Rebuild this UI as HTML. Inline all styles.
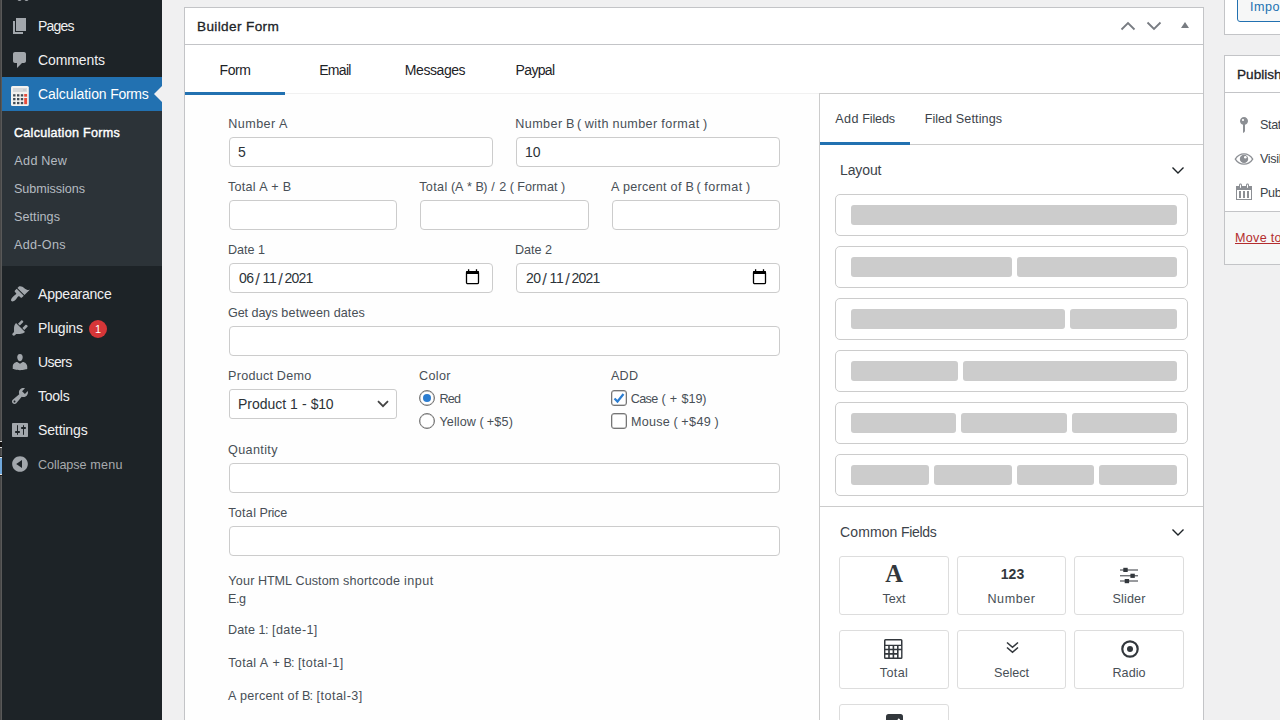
<!DOCTYPE html>
<html lang="en"><head>
<meta charset="utf-8">
<title>Edit Calculation Form</title>
<style>
*{box-sizing:border-box}
html,body{margin:0;padding:0}
body{width:1280px;height:720px;overflow:hidden;position:relative;background:#f0f0f1;
  font-family:"Liberation Sans",sans-serif;font-size:12.600px;line-height:18px;color:#3c434a}
ul{margin:0;padding:0;list-style:none}
h2,p{margin:0}
svg{display:block}
.abs{position:absolute}
.t{position:absolute;white-space:nowrap;line-height:18px}
.w{display:inline-block;white-space:nowrap;text-align:left;word-spacing:0}

/* window edge strip */
#edge{position:absolute;left:0;top:0;width:2px;height:720px;background:linear-gradient(90deg,#484848 0,#484848 50%,#595959 50%,#595959 100%)}
#edge i{position:absolute;left:0;width:2px}

/* admin menu */
#adminmenu{position:absolute;left:2px;top:0;width:160px;height:720px;background:#1d2327;color:#f0f0f1;font-size:14px}
#adminmenu li.top{position:absolute;left:0;width:160px;height:34px}
#adminmenu li.top .ic{position:absolute;left:8px;top:7px;width:20px;height:20px}
#adminmenu li.top .ic svg{width:20px;height:20px;fill:#a2a7ac}
#adminmenu li.top .nm{position:absolute;left:36px;top:8px;line-height:18px;white-space:nowrap}
#adminmenu li.current{background:#2271b1;color:#fff}
#adminmenu li.current:after{content:"";position:absolute;right:0;top:9px;border:8px solid transparent;border-right-color:#f0f0f1}
#adminmenu .sub{position:absolute;left:0;top:34px;width:160px;height:155px;background:#2c3338;padding-top:7px;font-size:12.600px;color:#b5bbc1}
#adminmenu .sub li{height:28px;padding:6px 12px 4px;line-height:18px;white-space:nowrap}
#adminmenu .sub li.cur{color:#fff;-webkit-text-stroke:.4px #fff}
#adminmenu .badge{position:absolute;left:87px;top:9px;width:18px;height:18px;border-radius:9px;background:#d63638;color:#fff;font-size:11px;line-height:18px;text-align:center}

/* postboxes */
.postbox{position:absolute;background:#fff;border:1px solid #c3c4c7}
.postbox h2{font-size:13.600px;font-weight:normal;-webkit-text-stroke:.3px #1d2327;color:#1d2327;line-height:18px}

.tabs{z-index:1;position:absolute;left:0;top:37px;width:1018px;height:49px;border-bottom:1px solid #f1f1f1}
.tabs li{position:absolute;top:0;width:100px;height:50px;text-align:center;font-size:14px;line-height:18px;padding-top:16px;color:#1d2327;white-space:nowrap}
.tabs li.on{border-bottom:3px solid #2271b1}
.canvas{position:absolute;left:0;top:86px;width:634px;height:700px;background:#fefefe;margin:0}
.panel{z-index:2;position:absolute;left:634px;top:85px;width:384px;height:700px;border-left:1px solid #ccc;border-top:1px solid #ccc;background:#fff}
.btn{display:block;height:30px;border:1px solid #2271b1;border-radius:3px;background:#f6f7f7;color:#2271b1;padding:0 10px 0 12px;line-height:28px;white-space:nowrap}

.lb{color:#484f56;font-size:12.600px;margin-top:1px}
.in{position:absolute;height:30px;border:1px solid #ccc;border-radius:4px;background:#fff;font:14px/18px "Liberation Sans",sans-serif;color:#2c3338;padding:0 8px;margin:0;outline:0}
.in.date .cal{position:absolute;right:12px;top:5px}
.in.sel{border-radius:3px}
.in .sl{font-size:16.500px;width:6px;text-align:center;color:#3c434a;margin-top:1px}
.in.sel .chev{position:absolute;right:7px;top:10px}
.radio,.check{position:absolute;width:16px;height:16px;border:1px solid #767676;background:#fff;box-shadow:inset 0 0 0 .4px #999}
.radio{border-radius:50%}
.radio.on:after{content:"";position:absolute;left:3px;top:3px;width:8px;height:8px;border-radius:50%;background:#2b7dd1}
.check{border-radius:3px}
.check svg{position:absolute;left:-1px;top:-1px}

.ptabs{position:absolute;left:0;top:0;width:383px;height:51px;border-bottom:1px solid #ccc}
.ptabs li{position:absolute;top:0;height:51px;text-align:center;font-size:12.600px;line-height:18px;padding-top:16px;color:#3c434a;white-space:nowrap}
.ptabs li.on{border-bottom:3px solid #2271b1}
.grp{position:absolute;left:0;width:383px;border-bottom:1px solid #ccc}
.grp h3{margin:0;font-size:14px;font-weight:normal;color:#3c434a}
.grp .chv{position:absolute;left:351px;top:21px}
.lay{position:absolute;left:15px;width:353px;height:42px;border:1px solid #ccc;border-radius:5px;background:#fff}
.lay i{position:absolute;top:10px;height:20px;background:#ccc;border-radius:3px}
.fld{position:absolute;height:59px;border:1px solid #ddd;border-radius:3px;background:#fff;padding:0;margin:0;font:12.600px/18px "Liberation Sans",sans-serif;color:#484f56;text-align:center}
.fld .gi{position:absolute;left:0;right:0;color:#32373c;text-align:center}
.fld .gs{position:absolute}
.fld .fl{position:absolute;left:0;right:0;top:33px;white-space:nowrap;line-height:18px}
.misc li{position:absolute;left:0;width:298px;height:20px}
.misc svg{position:absolute;left:9px;top:0;width:20px;height:20px;fill:#8c8f94}
.misc .t{left:35px;top:1px;letter-spacing:-.35px}
.acts{position:absolute;left:0;top:155px;width:298px;height:53px;border-top:1px solid #c3c4c7;background:#f6f7f7}
.del{color:#b32d2e;text-decoration:underline}
</style>
</head>
<body>

<div id="edge">
  <i style="top:441px;height:1px;background:#d8d8d8"></i>
  <i style="top:442px;height:5px;background:#111"></i>
  <i style="top:447px;height:1px;background:#d8d8d8"></i>
  <i style="top:456px;height:1px;background:#222"></i>
  <i style="top:457px;height:1px;background:#e8e8e8"></i>
  <i style="top:458px;height:16px;background:#6fa8dc"></i>
  <i style="top:474px;height:1px;background:#e8e8e8"></i>
  <i style="top:475px;height:1px;background:#222"></i>
</div>

<nav id="adminmenu">
  <ul>
    <li class="top" style="top:-25px"><span class="ic" style="top:7.400px"><svg viewBox="0 0 20 20"><path d="M13 11V4c0-.55-.45-1-1-1h-1.670L9 1H5L3.670 3H2c-.55 0-1 .45-1 1v7c0 .55.45 1 1 1h10c.55 0 1-.45 1-1zM7 4.500c1.380 0 2.500 1.120 2.500 2.500S8.380 9.500 7 9.500 4.500 8.380 4.500 7 5.620 4.500 7 4.500zM14 6h5v10.500c0 1.380-1.120 2.500-2.500 2.500S14 17.880 14 16.500s1.120-2.500 2.500-2.500c.17 0 .34.020.5.050V9h-3V6zm-4 8.050V13h2v3.500c0 1.380-1.120 2.500-2.500 2.500S7 17.880 7 16.500 8.120 14 9.500 14c.17 0 .34.020.5.050z"></path></svg></span><span class="nm">Media</span></li>
    <li class="top" style="top:9px"><span class="ic"><svg viewBox="0 0 20 20"><path d="M6 15V2h10v13H6zm-1 1h8v2H3V5h2v11z"></path></svg></span><span class="nm" style="letter-spacing: -0.801px;">Pages</span></li>
    <li class="top" style="top:43px"><span class="ic"><svg viewBox="0 0 20 20"><path d="M5 2h9c1.100 0 2 .9 2 2v7c0 1.100-.9 2-2 2h-2l-5 5v-5H5c-1.100 0-2-.9-2-2V4c0-1.100.9-2 2-2z"></path></svg></span><span class="nm" style="letter-spacing: -0.098px;">Comments</span></li>
    <li class="top current" style="top:77px"><span class="ic calc" style="top:9px"><svg viewBox="0 0 20 20"><rect x="1" y="0" width="17.800" height="20" rx="1.500" fill="#f3f2f0"></rect><rect x="3" y="2" width="14" height="4" fill="#d6d9db"></rect><rect x="13" y="3" width="3" height="2" fill="#c9cccf"></rect><g fill="#414c56"><rect x="3.1" y="8.2" width="2.400" height="2.300"></rect><rect x="3.1" y="12.0" width="2.400" height="2.300"></rect><rect x="3.1" y="15.9" width="2.400" height="2.300"></rect><rect x="7.0" y="8.2" width="2.400" height="2.300"></rect><rect x="7.0" y="12.0" width="2.400" height="2.300"></rect><rect x="7.0" y="15.9" width="2.400" height="2.300"></rect><rect x="10.8" y="8.2" width="2.400" height="2.300"></rect><rect x="10.8" y="12.0" width="2.400" height="2.300"></rect><rect x="10.8" y="15.9" width="2.400" height="2.300"></rect></g><rect x="14.200" y="8" width="2.900" height="2.700" fill="#e74c3c"></rect><rect x="14.200" y="12" width="2.900" height="6.200" fill="#e74c3c"></rect></svg></span><span class="nm" style="word-spacing: -0.04px;"><span class="w" style="width: 68.61px; letter-spacing: -0.06px; text-indent: -0.03px;">Calculation</span> <span class="w" style="width: 38.039px; letter-spacing: -0.327px; text-indent: -0.163px;">Forms</span></span>
      <ul class="sub">
        <li class="cur"><span style="letter-spacing: 0.263px;">Calculation Forms</span></li>
        <li><span style="word-spacing: 0.052px;"><span class="w" style="width: 23.61px; letter-spacing: 0.396px; text-indent: 0.198px;">Add</span> <span class="w" style="width: 25.838px; letter-spacing: 0.212px; text-indent: 0.106px;">New</span></span></li>
        <li><span style="letter-spacing: -0.041px;">Submissions</span></li>
        <li><span style="letter-spacing: 0.069px;">Settings</span></li>
        <li><span style="letter-spacing: 0.299px;">Add-Ons</span></li>
      </ul>
    </li>
    <li class="top" style="top:277px"><span class="ic"><svg viewBox="0 0 20 20"><path d="M14.480 11.060L7.410 3.990l1.500-1.500c.5-.56 2.300-.47 3.510.32 1.210.8 1.430 1.280 2.910 2.100 1.180.64 2.450 1.260 4.450.85zm-.71.71L6.700 4.700 4.930 6.470c-.39.39-.39 1.020 0 1.410l1.060 1.060c.39.39.39 1.030 0 1.420-.6.6-1.430 1.110-2.210 1.690-.35.26-.7.53-1.010.84C1.430 14.230.4 16.080 1.400 17.070c.99 1 2.840-.03 4.180-1.360.31-.31.58-.66.850-1.020.57-.78 1.080-1.610 1.690-2.210.39-.39 1.020-.39 1.410 0l1.060 1.060c.39.39 1.020.39 1.410 0z"></path></svg></span><span class="nm" style="letter-spacing: -0.202px;">Appearance</span></li>
    <li class="top" style="top:311px"><span class="ic"><svg viewBox="0 0 20 20"><path d="M13.110 4.360L9.870 7.600 8 5.730l3.240-3.240c.35-.34 1.050-.2 1.560.32.520.51.660 1.210.31 1.550zm-8 1.770l.91-1.120 9.010 9.010-1.190.84c-.71.710-2.630 1.160-3.820 1.160H6.140L4.900 17.260c-.59.59-1.540.59-2.120 0-.59-.58-.59-1.530 0-2.120l1.240-1.240v-3.880c0-1.130.4-3.190 1.090-3.890zm7.260 3.970l3.240-3.240c.34-.35 1.040-.21 1.550.31.520.51.660 1.210.31 1.550l-3.240 3.250z"></path></svg></span><span class="nm" style="letter-spacing: -0.154px;">Plugins</span><span class="badge">1</span></li>
    <li class="top" style="top:345px"><span class="ic"><svg viewBox="0 0 20 20"><path d="M10 9.250c-2.270 0-2.730-3.440-2.730-3.440C7 4.020 7.820 2 9.970 2c2.160 0 2.980 2.020 2.710 3.810 0 0-.41 3.440-2.680 3.440zm0 2.570L12.720 10c2.390 0 4.520 2.330 4.520 4.530v2.490s-3.650 1.130-7.240 1.130c-3.650 0-7.240-1.130-7.240-1.130v-2.490c0-2.250 1.940-4.480 4.470-4.480z"></path></svg></span><span class="nm" style="letter-spacing: -0.591px;">Users</span></li>
    <li class="top" style="top:379px"><span class="ic"><svg viewBox="0 0 20 20"><path d="M16.680 9.770c-1.340 1.340-3.300 1.670-4.950.99l-5.410 6.520c-.99.990-2.590.990-3.580 0s-.99-2.590 0-3.570l6.520-5.420c-.68-1.650-.35-3.610.99-4.950 1.280-1.280 3.120-1.620 4.720-1.060l-2.890 2.890 2.820 2.820 2.860-2.870c.53 1.580.18 3.390-1.080 4.650zM3.810 16.210c.4.390 1.040.39 1.430 0 .4-.4.4-1.040 0-1.430-.39-.4-1.030-.4-1.430 0-.39.390-.39 1.030 0 1.430z"></path></svg></span><span class="nm" style="letter-spacing: -0.247px;">Tools</span></li>
    <li class="top" style="top:413px"><span class="ic"><svg viewBox="0 0 20 20"><path d="M18 16V4c0-.55-.45-1-1-1H3c-.55 0-1 .45-1 1v12c0 .55.45 1 1 1h14c.55 0 1-.45 1-1zM8 11h1c.55 0 1 .45 1 1s-.45 1-1 1H8v1.500c0 .28-.22.5-.5.5s-.5-.22-.5-.5V13H6c-.55 0-1-.45-1-1s.45-1 1-1h1V5.500c0-.28.22-.5.5-.5s.5.22.5.5V11zm5-2h-1c-.55 0-1-.45-1-1s.45-1 1-1h1V5.500c0-.28.22-.5.5-.5s.5.22.5.5V7h1c.55 0 1 .45 1 1s-.45 1-1 1h-1v5.500c0 .28-.22.5-.5.5s-.5-.22-.5-.5V9z"></path></svg></span><span class="nm" style="letter-spacing: -0.128px;">Settings</span></li>
    <li class="top" style="top:447px;font-size:12.600px;color:#a7aaad"><span class="ic"><svg viewBox="0 0 20 20"><path d="M10 2.160c4.330 0 7.840 3.510 7.840 7.840s-3.510 7.840-7.840 7.840S2.160 14.330 2.160 10 5.670 2.160 10 2.160zm2 11.720V6.120L6.180 9.970z"></path></svg></span><span class="nm" style="top: 9px; word-spacing: 0.058px;"><span class="w" style="width: 48.489px; letter-spacing: -0.066px; text-indent: -0.033px;">Collapse</span> <span class="w" style="width: 32.654px; letter-spacing: 0.284px; text-indent: 0.142px;">menu</span></span></li>
  </ul>
</nav>

<main id="content">

<section class="postbox" id="builder" style="left:184px;top:7px;width:1020px;height:730px">
  <header class="hndle" style="position:absolute;left:0;top:0;width:1018px;height:37px;border-bottom:1px solid #c3c4c7">
    <h2 class="t" style="left: 12px; top: 10px; letter-spacing: 0.362px;">Builder Form</h2>
    <span class="abs" style="left:934px;top:12px"><svg width="18" height="12" viewBox="0 0 18 12"><path d="M2.500 9.500L9 3l6.500 6.500" fill="none" stroke="#787c82" stroke-width="1.800"></path></svg></span>
    <span class="abs" style="left:960px;top:12px"><svg width="18" height="12" viewBox="0 0 18 12"><path d="M2.500 2.500L9 9l6.500-6.500" fill="none" stroke="#787c82" stroke-width="1.800"></path></svg></span>
    <span class="abs" style="left:996px;top:14px"><svg width="8" height="6" viewBox="0 0 8 6"><path d="M0 6L4 0l4 6z" fill="#787c82"></path></svg></span>
  </header>

  <ul class="tabs">
    <li class="on" style="left:0"><span style="letter-spacing: -0.457px;">Form</span></li>
    <li style="left:100px"><span style="letter-spacing: -0.679px;">Email</span></li>
    <li style="left:200px"><span style="letter-spacing: -0.43px;">Messages</span></li>
    <li style="left:300px"><span style="letter-spacing: -0.662px;">Paypal</span></li>
  </ul>

  <form class="canvas" onsubmit="return false">
    <label class="t lb" style="left: 43px; top: 20px; word-spacing: 0.081px;"><span class="w" style="width: 47.486px; letter-spacing: 0.448px; text-indent: 0.224px;">Number</span> <span class="w" style="width: 8.433px; text-align: center;">A</span></label>
    <input class="in" type="text" value="5" style="left:44px;top:43px;width:264px">
    <label class="t lb" style="left: 330px; top: 20px; word-spacing: 0.072px;"><span class="w" style="width: 47.362px; letter-spacing: 0.427px; text-indent: 0.214px;">Number</span> <span class="w" style="width: 7.474px; text-align: center;">B</span> <span class="w" style="width: 3.935px; text-align: center;">(</span> <span class="w" style="width: 24.359px; letter-spacing: 0.488px; text-indent: 0.244px;">with</span> <span class="w" style="width: 44.981px; letter-spacing: 0.38px; text-indent: 0.19px;">number</span> <span class="w" style="width: 38.525px; letter-spacing: 0.47px; text-indent: 0.235px;">format</span> <span class="w" style="width: 3.935px; text-align: center;">)</span></label>
    <input class="in" type="text" value="10" style="left:331px;top:43px;width:264px">
    <label class="t lb" style="left: 43px; top: 83px; word-spacing: -0.051px;"><span class="w" style="width: 27.698px; letter-spacing: 0.218px; text-indent: 0.109px;">Total</span> <span class="w" style="width: 8.122px; text-align: center;">A</span> <span class="w" style="width: 8.614px; text-align: center;">+</span> <span class="w" style="width: 7.218px; text-align: center;">B</span></label>
    <input class="in" type="text" style="left:44px;top:106px;width:168px">
    <label class="t lb" style="left: 234px; top: 83px; word-spacing: 0.042px;"><span class="w" style="width: 28.442px; letter-spacing: 0.367px; text-indent: 0.183px;">Total</span> <span class="w" style="width: 12.242px; letter-spacing: -0.176px; text-indent: -0.088px;">(A</span> <span class="w" style="width: 5.392px; text-align: center;">*</span> <span class="w" style="width: 11.314px; letter-spacing: -0.64px; text-indent: -0.32px;">B)</span> <span class="w" style="width: 5.038px; text-align: center;">/</span> <span class="w" style="width: 6.97px; text-align: center;">2</span> <span class="w" style="width: 3.902px; text-align: center;">(</span> <span class="w" style="width: 40.463px; letter-spacing: 0.095px; text-indent: 0.048px;">Format</span> <span class="w" style="width: 3.902px; text-align: center;">)</span></label>
    <input class="in" type="text" style="left:235px;top:106px;width:169px">
    <label class="t lb" style="left: 426px; top: 83px; word-spacing: 0.07px;"><span class="w" style="width: 8.406px; text-align: center;">A</span> <span class="w" style="width: 43.625px; letter-spacing: 0.23px; text-indent: 0.115px;">percent</span> <span class="w" style="width: 11.714px; letter-spacing: 0.599px; text-indent: 0.3px;">of</span> <span class="w" style="width: 7.47px; text-align: center;">B</span> <span class="w" style="width: 3.932px; text-align: center;">(</span> <span class="w" style="width: 38.503px; letter-spacing: 0.467px; text-indent: 0.233px;">format</span> <span class="w" style="width: 3.932px; text-align: center;">)</span></label>
    <input class="in" type="text" style="left:427px;top:106px;width:168px">
    <label class="t lb" style="left: 43px; top: 146px; word-spacing: 0.013px;"><span class="w" style="width: 26.573px; letter-spacing: -0.009px; text-indent: -0.005px;">Date</span> <span class="w" style="width: 6.914px; text-align: center;">1</span></label>
    <div class="in date" style="left:44px;top:169px;width:264px"><span class="t" style="left: 9px; top: 5px; letter-spacing: -0.578px;">06</span><span class="t sl" style="left:24.500px;top:5px">/</span><span class="t" style="left: 32.5px; top: 5px; letter-spacing: -0.247px;">11</span><span class="t sl" style="left:47.500px;top:5px">/</span><span class="t" style="left: 54.5px; top: 5px; letter-spacing: -0.785px;">2021</span><svg class="cal" width="16" height="16" viewBox="0 0 16 16"><rect x="2.500" y="2.600" width="12" height="12" rx="1.200" fill="none" stroke="#000" stroke-width="1.300"></rect><rect x="2" y="2" width="13" height="3" rx=".8" fill="#000"></rect><path d="M4.600 0.200v2.500M12.500 0.200v2.500" stroke="#000" stroke-width="1.300"></path></svg></div>
    <label class="t lb" style="left: 330px; top: 146px; word-spacing: 0.013px;"><span class="w" style="width: 26.573px; letter-spacing: -0.009px; text-indent: -0.005px;">Date</span> <span class="w" style="width: 6.914px; text-align: center;">2</span></label>
    <div class="in date" style="left:331px;top:169px;width:264px"><span class="t" style="left: 9px; top: 5px; letter-spacing: -0.578px;">20</span><span class="t sl" style="left:24.500px;top:5px">/</span><span class="t" style="left: 32.5px; top: 5px; letter-spacing: -0.247px;">11</span><span class="t sl" style="left:47.500px;top:5px">/</span><span class="t" style="left: 54.5px; top: 5px; letter-spacing: -0.785px;">2021</span><svg class="cal" width="16" height="16" viewBox="0 0 16 16"><rect x="2.500" y="2.600" width="12" height="12" rx="1.200" fill="none" stroke="#000" stroke-width="1.300"></rect><rect x="2" y="2" width="13" height="3" rx=".8" fill="#000"></rect><path d="M4.600 0.200v2.500M12.500 0.200v2.500" stroke="#000" stroke-width="1.300"></path></svg></div>
    <label class="t lb" style="left: 43px; top: 209px; word-spacing: 0.053px;"><span class="w" style="width: 20.089px; letter-spacing: -0.075px; text-indent: -0.037px;">Get</span> <span class="w" style="width: 25.985px; letter-spacing: -0.156px; text-indent: -0.078px;">days</span> <span class="w" style="width: 49.063px; letter-spacing: 0.205px; text-indent: 0.103px;">between</span> <span class="w" style="width: 30.906px; letter-spacing: 0.019px; text-indent: 0.009px;">dates</span></label>
    <input class="in" type="text" style="left:44px;top:232px;width:551px">
    <label class="t lb" style="left: 43px; top: 272px; word-spacing: 0.078px;"><span class="w" style="width: 45.038px; letter-spacing: 0.233px; text-indent: 0.117px;">Product</span> <span class="w" style="width: 34.884px; letter-spacing: 0.322px; text-indent: 0.161px;">Demo</span></label>
    <div class="in sel" style="left:44px;top:295px;width:168px"><span class="t" style="left: 8px; top: 5px; word-spacing: -0.058px;"><span class="w" style="width: 48.238px; letter-spacing: -0.002px; text-indent: -0.001px;">Product</span> <span class="w" style="width: 7.542px; text-align: center;">1</span> <span class="w" style="width: 5.595px; text-align: center;">-</span> <span class="w" style="width: 22.627px; letter-spacing: -0.244px; text-indent: -0.122px;">$10</span></span><svg class="chev" width="12" height="8" viewBox="0 0 12 8"><path d="M1 1.200l5 5 5-5" fill="none" stroke="#444" stroke-width="1.800"></path></svg></div>
    <label class="t lb" style="left: 234px; top: 272px; letter-spacing: 0.348px;">Color</label>
    <span class="radio on" style="left:234px;top:296px"></span><label class="t lb" style="left: 254.5px; top: 295px; letter-spacing: -0.805px;">Red</label>
    <span class="radio" style="left:234px;top:319px"></span><label class="t lb" style="left: 254.5px; top: 318px; word-spacing: -0.017px;"><span class="w" style="width: 36.455px; letter-spacing: 0.084px; text-indent: 0.042px;">Yellow</span> <span class="w" style="width: 3.837px; text-align: center;">(</span> <span class="w" style="width: 26.242px; letter-spacing: 0.17px; text-indent: 0.085px;">+$5)</span></label>
    <label class="t lb" style="left: 426px; top: 272px; letter-spacing: 0.203px;">ADD</label>
    <span class="check on" style="left:426px;top:296px"><svg width="16" height="16" viewBox="0 0 16 16"><path d="M3.500 8.500l3 3 6-7.500" fill="none" stroke="#2b7dd1" stroke-width="2.200"></path></svg></span><label class="t lb" style="left: 446px; top: 295px; word-spacing: 0.065px;"><span class="w" style="width: 27.005px; letter-spacing: -0.6px; text-indent: -0.3px;">Case</span> <span class="w" style="width: 3.927px; text-align: center;">(</span> <span class="w" style="width: 8.902px; text-align: center;">+</span> <span class="w" style="width: 24.972px; letter-spacing: -0.062px; text-indent: -0.031px;">$19)</span></label>
    <span class="check" style="left:426px;top:319px"></span><label class="t lb" style="left: 446px; top: 318px; word-spacing: 0.065px;"><span class="w" style="width: 39px; letter-spacing: 0.237px; text-indent: 0.119px;">Mouse</span> <span class="w" style="width: 3.927px; text-align: center;">(</span> <span class="w" style="width: 29.95px; letter-spacing: 0.394px; text-indent: 0.197px;">+$49</span> <span class="w" style="width: 3.927px; text-align: center;">)</span></label>
    <label class="t lb" style="left: 43px; top: 346px; letter-spacing: 0.371px;">Quantity</label>
    <input class="in" type="text" style="left:44px;top:369px;width:551px">
    <label class="t lb" style="left: 43px; top: 409px; word-spacing: 0.007px;"><span class="w" style="width: 28.162px; letter-spacing: 0.311px; text-indent: 0.155px;">Total</span> <span class="w" style="width: 27.331px; letter-spacing: -0.274px; text-indent: -0.137px;">Price</span></label>
    <input class="in" type="text" style="left:44px;top:432px;width:551px">
    <p class="t lb" style="left:43px;top:477px"><span style="word-spacing: 0.048px;"><span class="w" style="width: 26.571px; letter-spacing: 0.28px; text-indent: 0.14px;">Your</span> <span class="w" style="width: 33.712px; letter-spacing: -0.146px; text-indent: -0.073px;">HTML</span> <span class="w" style="width: 43.965px; letter-spacing: 0.096px; text-indent: 0.048px;">Custom</span> <span class="w" style="width: 57.267px; letter-spacing: 0.217px; text-indent: 0.109px;">shortcode</span> <span class="w" style="width: 29.791px; letter-spacing: 0.496px; text-indent: 0.248px;">input</span></span></p>
    <p class="t lb" style="left:43px;top:495px"><span style="letter-spacing: -0.453px;">E.g</span></p>
    <p class="t lb" style="left:43px;top:526px"><span style="word-spacing: 0.065px;"><span class="w" style="width: 26.963px; letter-spacing: 0.088px; text-indent: 0.044px;">Date</span> <span class="w" style="width: 9.843px; letter-spacing: -0.336px; text-indent: -0.168px;">1:</span> <span class="w" style="width: 45.563px; letter-spacing: 0.356px; text-indent: 0.178px;">[date-1]</span></span></p>
    <p class="t lb" style="left:43px;top:559px"><span style="word-spacing: 0.026px;"><span class="w" style="width: 28.317px; letter-spacing: 0.342px; text-indent: 0.171px;">Total</span> <span class="w" style="width: 8.303px; text-align: center;">A</span> <span class="w" style="width: 8.806px; text-align: center;">+</span> <span class="w" style="width: 10.177px; letter-spacing: -0.865px; text-indent: -0.432px;">B:</span> <span class="w" style="width: 45.791px; letter-spacing: 0.421px; text-indent: 0.211px;">[total-1]</span></span></p>
    <p class="t lb" style="left:43px;top:592px"><span style="word-spacing: 0.065px;"><span class="w" style="width: 8.394px; text-align: center;">A</span> <span class="w" style="width: 43.567px; letter-spacing: 0.222px; text-indent: 0.111px;">percent</span> <span class="w" style="width: 11.699px; letter-spacing: 0.592px; text-indent: 0.296px;">of</span> <span class="w" style="width: 10.288px; letter-spacing: -0.809px; text-indent: -0.405px;">B:</span> <span class="w" style="width: 46.293px; letter-spacing: 0.477px; text-indent: 0.238px;">[total-3]</span></span></p>
  </form>

  <aside class="panel">
    <ul class="ptabs">
      <li class="on" style="left:0;width:90px"><span style="word-spacing: 0.071px;"><span class="w" style="width: 23.739px; letter-spacing: 0.439px; text-indent: 0.22px;">Add</span> <span class="w" style="width: 32.69px; letter-spacing: -0.151px; text-indent: -0.075px;">Fileds</span></span></li>
      <li style="left:90px;width:107px"><span style="word-spacing: 0.093px;"><span class="w" style="width: 27.324px; letter-spacing: 0.005px; text-indent: 0.003px;">Filed</span> <span class="w" style="width: 46.583px; letter-spacing: 0.133px; text-indent: 0.067px;">Settings</span></span></li>
    </ul>
    <section class="grp" style="top:51px;height:362px">
      <h3 class="t" style="left: 20px; top: 16px; letter-spacing: -0.109px;">Layout</h3><svg class="chv" width="14" height="9" viewBox="0 0 14 9"><path d="M1.500 1.500L7 7l5.500-5.500" fill="none" stroke="#1d2327" stroke-width="1.400"></path></svg>
      <div class="lay" style="top:49px"><i style="left:15px;width:326px"></i></div>
      <div class="lay" style="top:101px"><i style="left:15px;width:161px"></i><i style="left:181px;width:160px"></i></div>
      <div class="lay" style="top:153px"><i style="left:15px;width:214px"></i><i style="left:234px;width:107px"></i></div>
      <div class="lay" style="top:205px"><i style="left:15px;width:107px"></i><i style="left:127px;width:214px"></i></div>
      <div class="lay" style="top:257px"><i style="left:15px;width:105px"></i><i style="left:125px;width:106px"></i><i style="left:236px;width:105px"></i></div>
      <div class="lay" style="top:309px"><i style="left:15px;width:78px"></i><i style="left:98px;width:78px"></i><i style="left:181px;width:77px"></i><i style="left:263px;width:78px"></i></div>
    </section>
    <section class="grp" style="top:413px;height:300px">
      <h3 class="t" style="left: 20px; top: 16px; word-spacing: -0.036px;"><span class="w" style="width: 57.367px; letter-spacing: 0.095px; text-indent: 0.047px;">Common</span> <span class="w" style="width: 35.279px; letter-spacing: -0.347px; text-indent: -0.173px;">Fields</span></h3><svg class="chv" width="14" height="9" viewBox="0 0 14 9"><path d="M1.500 1.500L7 7l5.500-5.500" fill="none" stroke="#1d2327" stroke-width="1.400"></path></svg>
      <button type="button" class="fld" style="left:19px;top:49px;width:110px"><span class="gi" style="top:3px;font:bold 24.500px/28px 'Liberation Serif',serif">A</span><span class="fl"><span style="letter-spacing: -0.036px;">Text</span></span></button>
      <button type="button" class="fld" style="left:137px;top:49px;width:109px"><span class="gi" style="top:6px;font:bold 14px/22px 'Liberation Sans',sans-serif;padding-left:2px;-webkit-text-stroke:0">123</span><span class="fl"><span style="letter-spacing: 0.541px;">Number</span></span></button>
      <button type="button" class="fld" style="left:254px;top:49px;width:110px"><svg class="gs" style="left:45px;top:10px" width="18" height="17" viewBox="0 0 18 17"><path d="M0 3h18M0 8.800h18M0 14h18" stroke="#32373c" stroke-width="1" fill="none"></path><rect x="3.300" y="0.800" width="4.400" height="4.200" fill="#32373c"></rect><rect x="10.400" y="6.700" width="4.400" height="4.200" fill="#32373c"></rect><rect x="4.700" y="12" width="4.400" height="4.200" fill="#32373c"></rect></svg><span class="fl"><span style="letter-spacing: 0.159px;">Slider</span></span></button>
      <button type="button" class="fld" style="left:19px;top:123px;width:110px"><svg class="gs" style="left:43px;top:7px" width="20" height="22" viewBox="0 0 20 22"><path fill-rule="evenodd" fill="#32373c" d="M2.500 1h15.500a1.500 1.500 0 0 1 1.500 1.500v17a1.500 1.500 0 0 1-1.500 1.500H2.500A1.500 1.500 0 0 1 1 19.500v-17A1.500 1.500 0 0 1 2.500 1zM2.500 2.500v4.200h15.500V2.500zM2.400 7.900v2.800h2.800V7.900zM6.800 7.900v2.800h2.800V7.900zM11.200 7.900v2.800h2.800V7.900zM15.600 7.900v2.800h2.500V7.900zM2.400 12.300v2.800h2.800v-2.800zM6.800 12.300v2.800h2.800v-2.800zM11.200 12.300v2.800h2.800v-2.800zM15.600 12.300v7.200h2.500v-7.200zM2.400 16.700v2.800h2.800v-2.800zM6.800 16.700v2.800h2.800v-2.800zM11.200 16.700v2.800h2.800v-2.800z"></path></svg><span class="fl"><span style="letter-spacing: 0.348px;">Total</span></span></button>
      <button type="button" class="fld" style="left:137px;top:123px;width:109px"><svg class="gs" style="left:48px;top:10px" width="13" height="14" viewBox="0 0 13 14"><path d="M1 1.500l5.500 4.800 5.500-4.800M1 6.500l5.500 4.800 5.500-4.800" fill="none" stroke="#32373c" stroke-width="1.600"></path></svg><span class="fl"><span style="letter-spacing: -0.003px;">Select</span></span></button>
      <button type="button" class="fld" style="left:254px;top:123px;width:110px"><svg class="gs" style="left:45px;top:8px" width="20" height="20" viewBox="0 0 20 20"><circle cx="10" cy="10" r="7.700" fill="none" stroke="#32373c" stroke-width="2.200"></circle><circle cx="10" cy="10" r="3" fill="#32373c"></circle></svg><span class="fl"><span style="letter-spacing: 0.023px;">Radio</span></span></button>
      <button type="button" class="fld" style="left:19px;top:197px;width:110px"><svg class="gs" style="left:46px;top:9px" width="18" height="18" viewBox="0 0 18 18"><rect x="0" y="0" width="17" height="17" rx="2.500" fill="#32373c"></rect><path d="M4 9l3.200 3.200L13.500 5" fill="none" stroke="#fff" stroke-width="2"></path></svg><span class="fl"><span style="letter-spacing: -0.002px;">Checkbox</span></span></button>
    </section>
  </aside>
</section>

<aside id="side">
  <div class="postbox" style="left:1224px;top:-40px;width:300px;height:75px">
    <a class="btn" style="position:absolute;left:12px;top:31px"><span style="letter-spacing:.5px">Import Form</span></a>
  </div>
  <div class="postbox" style="left:1224px;top:55px;width:300px;height:210px">
    <header style="position:absolute;left:0;top:0;width:298px;height:37px;border-bottom:1px solid #c3c4c7"><h2 class="t" style="left:12px;top:10px">Publish</h2></header>
    <ul class="misc">
      <li style="top:59px"><svg viewBox="0 0 20 20"><path d="M14 6c0 1.860-1.280 3.410-3 3.860V16c0 1-2 2-2 2V9.860c-1.720-.45-3-2-3-3.860 0-2.210 1.790-4 4-4s4 1.790 4 4zM8 5c0 .55.45 1 1 1s1-.45 1-1-.45-1-1-1-1 .45-1 1z"></path></svg><span class="t">Status: <b>Published</b></span></li>
      <li style="top:93px"><svg viewBox="0 0 20 20"><path d="M1.300 10.100C3.400 6.700 6.400 4.900 10 4.900s6.600 1.800 8.700 5.200c-2.100 3.300-5.100 5-8.700 5s-6.600-1.700-8.700-5z" fill="#fff" stroke="#8c8f94" stroke-width="1.300"></path><circle cx="10" cy="9.900" r="4.200"></circle><circle cx="11.300" cy="8.300" r="1.300" fill="#fff"></circle></svg><span class="t">Visibility: <b>Public</b></span></li>
      <li style="top:127px"><svg style="top:-1px" viewBox="0 0 20 20"><path d="M15 4h3v14H2V4h3V3c0-.83.67-1.500 1.500-1.500S8 2.170 8 3v1h4V3c0-.83.67-1.500 1.500-1.500S15 2.170 15 3v1zM6 3v2.500c0 .28.22.5.5.5s.5-.22.5-.5V3c0-.28-.22-.5-.5-.5S6 2.720 6 3zm7 0v2.500c0 .28.22.5.5.5s.5-.22.5-.5V3c0-.28-.22-.5-.5-.5s-.5.22-.5.5zm4 14V8H3v9h14zM7 16V9H5v7h2zm4 0V9H9v7h2zm4 0V9h-2v7h2z"></path></svg><span class="t">Published on: <b>Nov 6, 2021 at 08:12</b></span></li>
    </ul>
    <footer class="acts"><a class="t del" style="left:10px;top:17px;letter-spacing:.3px">Move to Trash</a></footer>
  </div>
</aside>

</main>



</body></html>
